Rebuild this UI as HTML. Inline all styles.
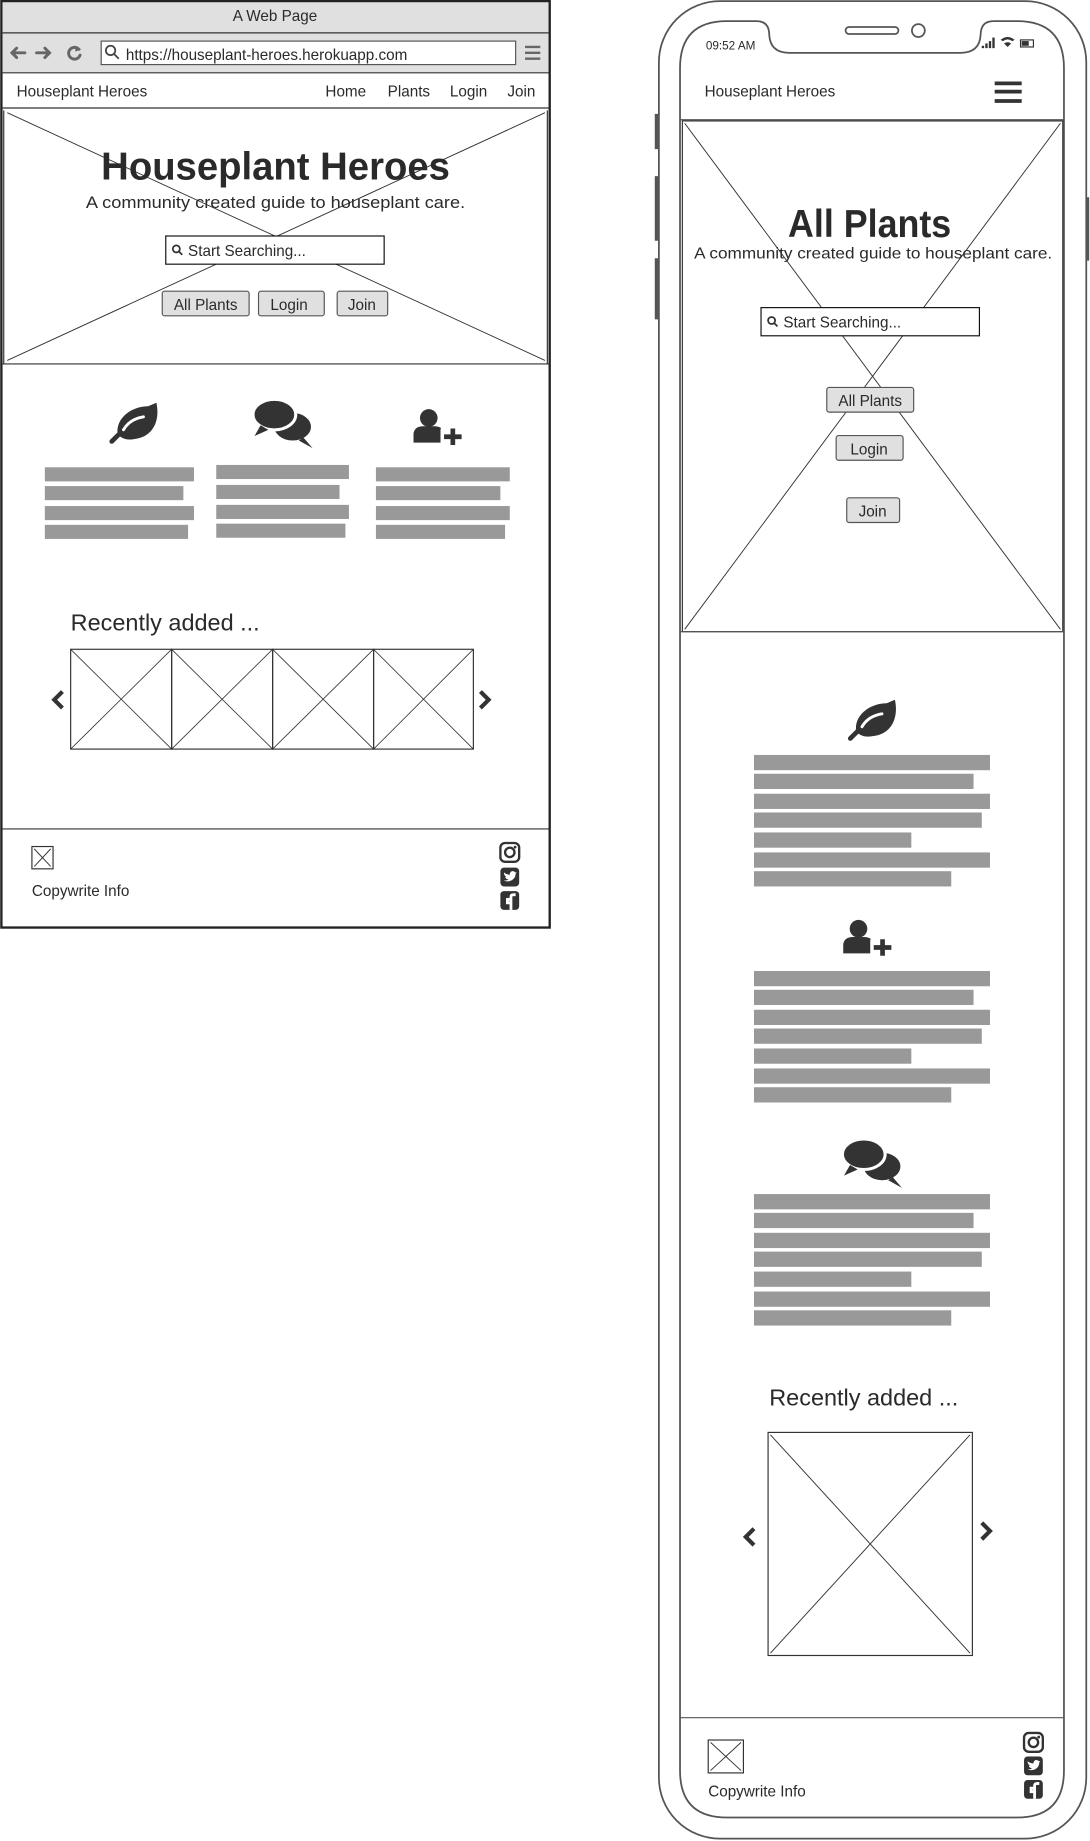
<!DOCTYPE html>
<html><head><meta charset="utf-8"><style>
html,body{margin:0;padding:0;background:#fff;}
svg{display:block;}
text{font-family:"Liberation Sans",sans-serif;fill:#2a2a2a;}
</style></head><body>
<svg width="1090" height="1841" viewBox="0 0 928 1568" xmlns="http://www.w3.org/2000/svg">
<defs>
<g id="leaf"><path d="M-14 10 C-16 -4 -2 -14 12 -14 L19 -17 C22 -4 18 12 0 14 C-6 15 -10 14 -14 10 Z" fill="#333"/><path d="M-19 16 L-12 9" stroke="#333" stroke-width="4" stroke-linecap="round"/><path d="M-9 6 C-5 -1 2 -4 8 -5" stroke="#fff" stroke-width="2.5" fill="none" stroke-linecap="round"/></g>
<g id="chat" transform="scale(1.3)"><ellipse cx="7" cy="5" rx="13" ry="10" fill="#333" stroke="#fff" stroke-width="2"/><path d="M14 12 L20 19 L11 14 Z" fill="#333"/><ellipse cx="-5" cy="-3" rx="14" ry="10" fill="#333" stroke="#fff" stroke-width="2"/><path d="M-14 4 L-18 11 L-9 7 Z" fill="#333"/></g>
<g id="user"><circle cx="-7" cy="-8" r="7.5" fill="#333"/><path d="M-20 13 L-20 6 C-20 1 -16 -1 -12 -1 L-2 -1 C2 -1 6 1 6 6 L6 13 Z" fill="#333"/><rect x="3" y="0" width="16" height="16" rx="2" fill="#fff"/><path d="M6 8 H21 M13.5 1 V15" stroke="#333" stroke-width="4"/></g>
<g id="ig"><rect x="-8" y="-8" width="16" height="16" rx="4" fill="none" stroke="#333" stroke-width="2"/><circle cx="0" cy="0" r="4" fill="none" stroke="#333" stroke-width="2"/><circle cx="4.5" cy="-4.5" r="1.2" fill="#333"/></g>
<g id="tw"><rect x="-8" y="-8" width="16" height="16" rx="3" fill="#333"/><path d="M-5 3 C0 5 5 2 5 -3 L6 -4 L4.5 -4 C3 -6 0 -5 0 -2 C-2 -2 -4 -3 -5 -4 C-5 -2 -4 -1 -3 0 L-4 0 C-3 2 -2 2 -1 2 C-2 3 -4 3 -5 3 Z" fill="#fff"/></g>
<g id="fb"><rect x="-8" y="-8" width="16" height="16" rx="3" fill="#333"/><path d="M1 8 V-1 H-2 V2 H1 M1 -1 V-3 C1 -5 2 -5 5 -5" stroke="#fff" stroke-width="2.4" fill="none"/></g>
<g id="bars" fill="#999"><rect x="0" y="0" width="201" height="13"/><rect x="0" y="16" width="187" height="13"/><rect x="0" y="33" width="201" height="13"/><rect x="0" y="49" width="194" height="13"/><rect x="0" y="66" width="134" height="13"/><rect x="0" y="83" width="201" height="13"/><rect x="0" y="99" width="168" height="13"/></g>
</defs>

<!-- Browser -->
<rect x="1" y="1" width="467" height="789" fill="#fff" stroke="#222" stroke-width="2"/>
<rect x="2" y="2" width="465" height="60" fill="#e0e0e0"/>
<line x1="2" y1="28" x2="467" y2="28" stroke="#333"/>
<line x1="2" y1="62" x2="467" y2="62" stroke="#333"/>
<text x="234" y="18" font-size="13" text-anchor="middle">A Web Page</text>
<g stroke="#666" stroke-width="2.5" fill="none" stroke-linecap="round">
<path d="M10 45 H21 M14 41 L10 45 L14 49"/><path d="M31 45 H42 M38 41 L42 45 L38 49"/>
<path d="M67 42 A5 5 0 1 0 68 47"/></g>
<path d="M64 39 L69 42 L64 44Z" fill="#666"/>
<rect x="86" y="35" width="353" height="20" fill="#fff" stroke="#555"/>
<circle cx="94" cy="43" r="4" fill="none" stroke="#444" stroke-width="1.5"/><line x1="97" y1="46" x2="101" y2="50" stroke="#444" stroke-width="1.5"/>
<text x="107" y="51" font-size="13" fill="#222">https://houseplant-heroes.herokuapp.com</text>
<path d="M447 40 H460 M447 45 H460 M447 50 H460" stroke="#666" stroke-width="2"/>
<text x="14" y="82" font-size="13">Houseplant Heroes</text>
<text x="277" y="82" font-size="13" fill="#111">Home</text><text x="330" y="82" font-size="13" fill="#111">Plants</text><text x="383" y="82" font-size="13" fill="#111">Login</text><text x="432" y="82" font-size="13" fill="#111">Join</text>
<line x1="2" y1="92" x2="467" y2="92" stroke="#333"/>
<line x1="6" y1="96" x2="464" y2="307" stroke="#333" stroke-width="0.8"/><line x1="464" y1="96" x2="6" y2="307" stroke="#333" stroke-width="0.8"/>
<line x1="2" y1="310" x2="467" y2="310" stroke="#333"/>
<line x1="3" y1="94" x2="3" y2="310" stroke="#333"/><line x1="466" y1="94" x2="466" y2="310" stroke="#333"/>
<text x="86" y="153" font-size="33" font-weight="bold" textLength="297" lengthAdjust="spacingAndGlyphs" fill="#3a3a3a">Houseplant Heroes</text>
<text x="73" y="177" font-size="14" textLength="323" lengthAdjust="spacingAndGlyphs">A community created guide to houseplant care.</text>
<rect x="141" y="201" width="186" height="24" fill="#fff" stroke="#111"/>
<circle cx="150" cy="212" r="3" fill="none" stroke="#333" stroke-width="1.5"/><line x1="152" y1="214" x2="155" y2="217" stroke="#333" stroke-width="1.5"/>
<text x="160" y="218" font-size="13">Start Searching...</text>
<g fill="#e0e0e0" stroke="#555"><rect x="138" y="248" width="74" height="21" rx="2"/><rect x="220" y="248" width="56" height="21" rx="2"/><rect x="287" y="248" width="43" height="21" rx="2"/></g>
<text x="175" y="264" font-size="13" text-anchor="middle">All Plants</text><text x="246" y="264" font-size="13" text-anchor="middle">Login</text><text x="308" y="264" font-size="13" text-anchor="middle">Join</text>
<use href="#leaf" x="114" y="360"/><use href="#chat" x="240" y="357"/><use href="#user" x="372" y="364"/>
<g fill="#999">
<rect x="38" y="398" width="127" height="12"/><rect x="38" y="414" width="118" height="12"/><rect x="38" y="431" width="127" height="12"/><rect x="38" y="447" width="122" height="12"/>
<rect x="184" y="396" width="113" height="12"/><rect x="184" y="413" width="105" height="12"/><rect x="184" y="430" width="113" height="12"/><rect x="184" y="446" width="110" height="12"/>
<rect x="320" y="398" width="114" height="12"/><rect x="320" y="414" width="106" height="12"/><rect x="320" y="431" width="114" height="12"/><rect x="320" y="447" width="110" height="12"/></g>
<text x="60" y="537" font-size="20" textLength="161" lengthAdjust="spacingAndGlyphs">Recently added ...</text>
<g stroke="#333" fill="none" stroke-width="1">
<rect x="60" y="553" width="86" height="85"/><rect x="146" y="553" width="86" height="85"/><rect x="232" y="553" width="86" height="85"/><rect x="318" y="553" width="85" height="85"/>
<path d="M60 553 L146 638 M146 553 L60 638 M146 553 L232 638 M232 553 L146 638 M232 553 L318 638 M318 553 L232 638 M318 553 L403 638 M403 553 L318 638" stroke-width="0.7"/></g>
<path d="M53 589 L46 596 L53 603" stroke="#333" stroke-width="3.5" fill="none"/>
<path d="M409 589 L416 596 L409 603" stroke="#333" stroke-width="3.5" fill="none"/>
<line x1="2" y1="706" x2="467" y2="706" stroke="#333"/>
<rect x="27" y="721" width="18" height="19" fill="none" stroke="#333"/><path d="M29 723 L43 738 M43 723 L29 738" stroke="#333" stroke-width="0.8"/>
<text x="27" y="763" font-size="13">Copywrite Info</text>
<use href="#ig" x="434" y="726"/><use href="#tw" x="434" y="747"/><use href="#fb" x="434" y="767"/>

<!-- Phone -->
<g stroke="#555" fill="none" stroke-width="1.5">
<rect x="561" y="1" width="364" height="1565" rx="52"/>
<path d="M619 18 L644 18 Q655 18 655 30 Q656 45 672 45 L818 45 Q834 45 835 30 Q835 18 846 18 L866 18 Q906 18 906 58 L906 1508 Q906 1548 866 1548 L619 1548 Q579 1548 579 1508 L579 58 Q579 18 619 18 Z"/>
<rect x="720" y="23" width="45" height="6" rx="3"/><circle cx="782" cy="26" r="5.5"/>
<path d="M559 97 V127 M559 150 V205 M559 220 V272 M926 168 V222" stroke-width="3"/></g>
<text x="601" y="42" font-size="10">09:52 AM</text>
<g fill="#333"><rect x="836" y="39" width="2" height="2"/><rect x="839" y="37" width="2" height="4"/><rect x="842" y="35" width="2" height="6"/><rect x="845" y="32" width="2" height="9"/>
<path d="M852 34 Q858 29 864 34 L862 35 Q858 32 854 35Z M855 37 Q858 35 861 37 L858 40Z"/>
<rect x="869" y="34" width="11" height="6" fill="none" stroke="#333"/><rect x="870" y="35" width="6" height="4"/></g>
<text x="600" y="82" font-size="13">Houseplant Heroes</text>
<path d="M847 71 H870 M847 78 H870 M847 86 H870" stroke="#333" stroke-width="3.2"/>
<line x1="579" y1="102" x2="906" y2="102" stroke="#555"/>
<rect x="581" y="103" width="324" height="435" fill="none" stroke="#333"/>
<path d="M583 105 L903 536 M903 105 L583 536" stroke="#333" stroke-width="0.8"/>
<text x="671" y="202" font-size="33" font-weight="bold" textLength="139" lengthAdjust="spacingAndGlyphs" fill="#3a3a3a">All Plants</text>
<text x="591" y="220" font-size="13" textLength="305" lengthAdjust="spacingAndGlyphs">A community created guide to houseplant care.</text>
<rect x="648" y="262" width="186" height="24" fill="#fff" stroke="#111"/>
<circle cx="657" cy="273" r="3" fill="none" stroke="#333" stroke-width="1.5"/><line x1="659" y1="275" x2="662" y2="278" stroke="#333" stroke-width="1.5"/>
<text x="667" y="279" font-size="13">Start Searching...</text>
<g fill="#e0e0e0" stroke="#555"><rect x="704" y="330" width="74" height="21" rx="2"/><rect x="712" y="371" width="57" height="21" rx="2"/><rect x="721" y="424" width="45" height="21" rx="2"/></g>
<text x="741" y="346" font-size="13" text-anchor="middle">All Plants</text><text x="740" y="387" font-size="13" text-anchor="middle">Login</text><text x="743" y="440" font-size="13" text-anchor="middle">Join</text>
<line x1="579" y1="538" x2="906" y2="538" stroke="#555"/>
<use href="#leaf" x="743" y="613"/><use href="#bars" x="642" y="643"/>
<use href="#user" x="738" y="799"/><use href="#bars" x="642" y="827"/>
<use href="#chat" x="742" y="987"/><use href="#bars" x="642" y="1017"/>
<text x="655" y="1197" font-size="20" textLength="161" lengthAdjust="spacingAndGlyphs">Recently added ...</text>
<rect x="654" y="1220" width="174" height="190" fill="none" stroke="#333"/><path d="M656 1222 L826 1408 M826 1222 L656 1408" stroke="#333" stroke-width="0.8"/>
<path d="M642 1302 L635 1309 L642 1316" stroke="#333" stroke-width="3.5" fill="none"/>
<path d="M836 1297 L843 1304 L836 1311" stroke="#333" stroke-width="3.5" fill="none"/>
<line x1="579" y1="1463" x2="906" y2="1463" stroke="#555"/>
<rect x="603" y="1482" width="30" height="28" fill="none" stroke="#333"/><path d="M605 1484 L631 1508 M631 1484 L605 1508" stroke="#333" stroke-width="0.8"/>
<text x="603" y="1530" font-size="13">Copywrite Info</text>
<use href="#ig" x="880" y="1484"/><use href="#tw" x="880" y="1504"/><use href="#fb" x="880" y="1524"/>
</svg>
</body></html>
